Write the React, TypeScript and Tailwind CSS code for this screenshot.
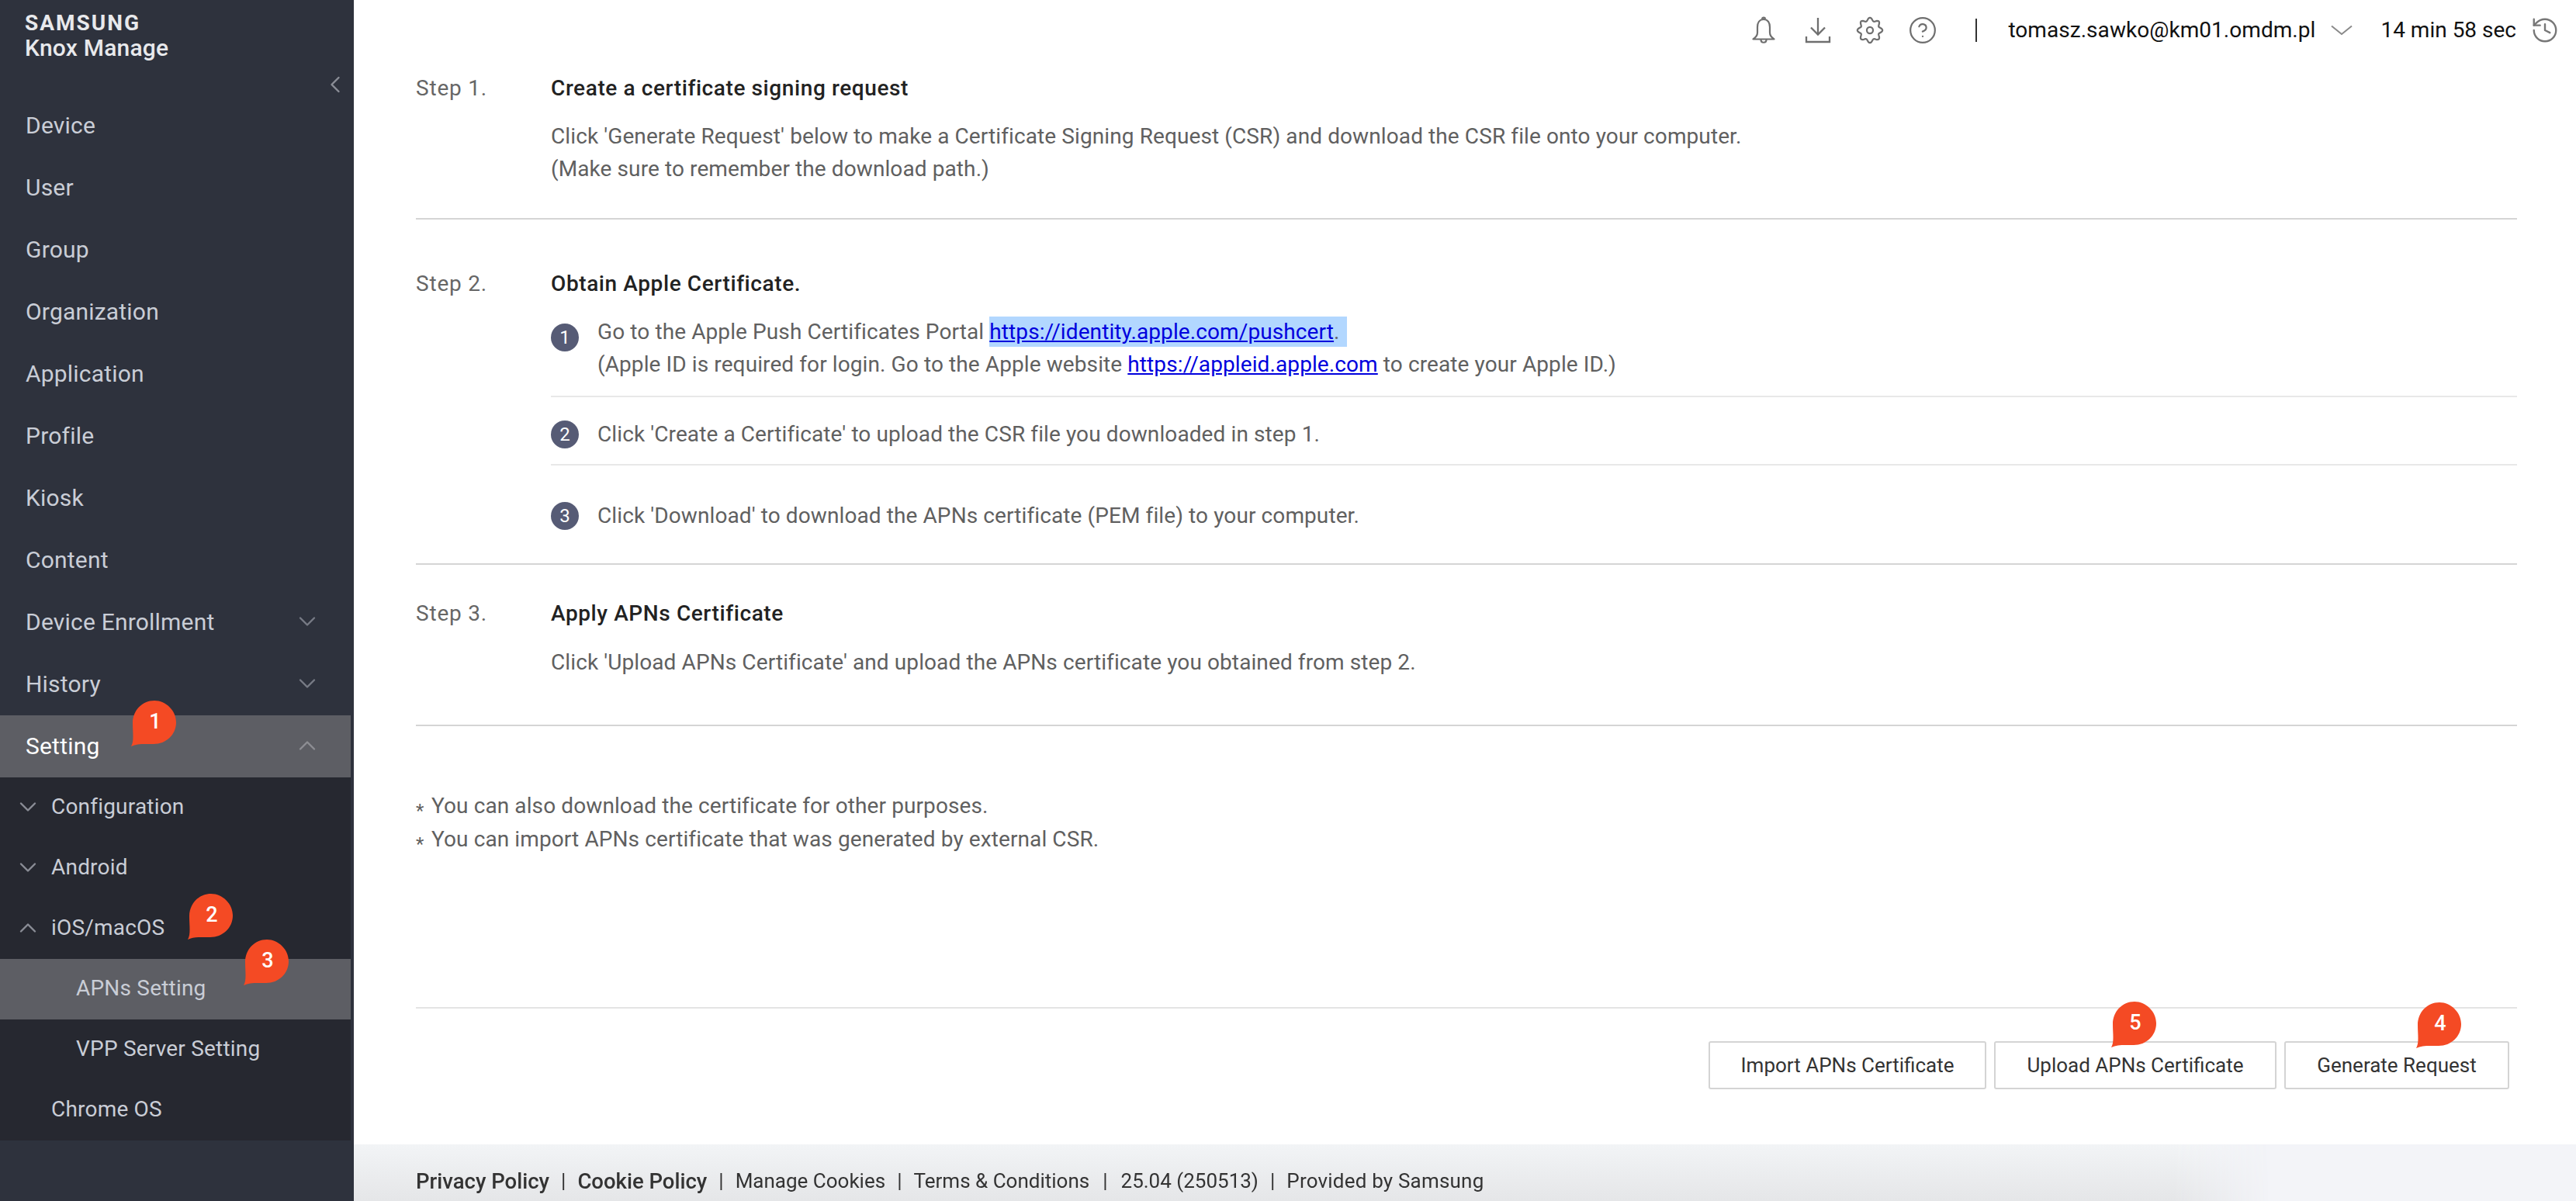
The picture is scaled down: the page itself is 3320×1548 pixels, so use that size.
import { ChevronDown, ChevronLeft, ChevronUp, CircleHelp, History } from "lucide-react";

// scalloped outline for the settings cog, 8 lobes
const gearPath = Array.from({ length: 96 }, (_, i) => {
  const a = (i / 96) * Math.PI * 2;
  const r = 13.4 + 1.9 * Math.cos(a * 8);
  return `${i === 0 ? "M" : "L"}${(17 + r * Math.sin(a)).toFixed(2)} ${(17 - r * Math.cos(a)).toFixed(2)}`;
}).join("") + "Z";

function Balloon({ n, className }: { n: string; className: string }) {
  return (
    <div className={`absolute z-10 h-[59px] w-[59px] ${className}`}>
      <svg viewBox="0 0 59 59" className="absolute inset-0 h-full w-full">
        <path
          d="M1 59C5 52 3 42 3 29C3 13 15 0 31 0C46 0 59 13 59 28C59 44 46 56 30 56C19 56 9 55 1 59Z"
          fill="#f44a24"
        />
      </svg>
      <span className="absolute inset-0 flex items-center justify-center pb-[4px] pl-[5px] text-[27px] font-medium text-white">
        {n}
      </span>
    </div>
  );
}

function NavItem({ label, open }: { label: string; open?: boolean }) {
  return (
    <div className="flex h-[80px] items-center justify-between pb-[2px] pl-[33px] pr-[42px] text-[30px] tracking-[0.2px] text-[#c9cdd6]">
      <span>{label}</span>
      {open === false && <ChevronDown size={36} strokeWidth={1.6} className="text-[#777b85]" />}
    </div>
  );
}

function SubItem({ label, icon, indent }: { label: string; icon?: "down" | "up"; indent?: boolean }) {
  return (
    <div className={`flex h-[78px] items-center pb-[2px] text-[28px] tracking-[0.2px] text-[#c9cdd6] ${indent ? "pl-[98px]" : "pl-[66px]"}`}>
      {icon === "down" && <ChevronDown size={36} strokeWidth={1.6} className="-ml-[48px] mr-[12px] text-[#8a8d96]" />}
      {icon === "up" && <ChevronUp size={36} strokeWidth={1.6} className="-ml-[48px] mr-[12px] text-[#8a8d96]" />}
      <span>{label}</span>
    </div>
  );
}

function Sidebar() {
  return (
    <aside className="flex h-full w-[456px] shrink-0 flex-col bg-[#2e323d]">
      <div className="relative h-[122px] pl-[32px] pt-[15px] text-[#e8e9ec]">
        <div className="text-[28px] font-bold leading-[30px] tracking-[2px]">SAMSUNG</div>
        <div className="text-[30px] font-medium leading-[34px] tracking-[0.2px]">Knox Manage</div>
        <ChevronLeft size={36} strokeWidth={1.6} className="absolute left-[414px] top-[91px] text-[#8b8e97]" />
      </div>
      <NavItem label="Device" />
      <NavItem label="User" />
      <NavItem label="Group" />
      <NavItem label="Organization" />
      <NavItem label="Application" />
      <NavItem label="Profile" />
      <NavItem label="Kiosk" />
      <NavItem label="Content" />
      <NavItem label="Device Enrollment" open={false} />
      <NavItem label="History" open={false} />
      <div className="relative flex h-[80px] w-[452px] items-center justify-between pb-[2px] bg-[#5d5e64] pl-[33px] pr-[38px] text-[30px] tracking-[0.2px] text-white">
        <span>Setting</span>
        <ChevronUp size={36} strokeWidth={1.6} className="text-[#8d8e93]" />
        <Balloon n="1" className="left-[168px] top-[-19px]" />
      </div>
      <div className="w-[452px] bg-[#262830]">
        <SubItem label="Configuration" icon="down" />
        <SubItem label="Android" icon="down" />
        <div className="relative">
          <SubItem label="iOS/macOS" icon="up" />
          <Balloon n="2" className="left-[241px] top-[-6px]" />
        </div>
        <div className="relative bg-[#5d5e64]">
          <SubItem label="APNs Setting" indent />
          <Balloon n="3" className="left-[313px] top-[-25px]" />
        </div>
        <SubItem label="VPP Server Setting" indent />
        <SubItem label="Chrome OS" />
      </div>
    </aside>
  );
}

function TopBar() {
  return (
    <header className="flex h-[80px] shrink-0 items-center justify-end pb-[2px] pr-[21px] text-[#111]">
      <div className="flex items-center text-[#6f6f6f]">
        <svg viewBox="0 0 30 36" className="h-[36px] w-[30px]" fill="none" stroke="currentColor" strokeWidth="2.2" strokeLinejoin="round">
          <path d="M15 4C9.5 4 7 8.5 7 14V21C7 25 4.5 27.5 1.5 29.5H28.5C25.5 27.5 23 25 23 21V14C23 8.5 20.5 4 15 4Z" />
          <path d="M13 3.5C13 1 17 1 17 3.5" />
          <path d="M11.5 30C11.5 35 18.5 35 18.5 30" />
        </svg>
        <svg viewBox="0 0 34 34" className="ml-[38px] h-[34px] w-[34px]" fill="none" stroke="currentColor" strokeWidth="2.3">
          <path d="M17 1V22" />
          <path d="M8 13.5L17 22.5L26 13.5" />
          <path d="M2 25V32H32V25" />
        </svg>
        <svg viewBox="0 0 34 34" className="ml-[32px] h-[36px] w-[36px]" fill="none" stroke="currentColor" strokeWidth="2.1" strokeLinejoin="round">
          <path d={gearPath} />
          <circle cx="17" cy="17" r="3.8" />
        </svg>
        <CircleHelp size={38} strokeWidth={1.4} className="ml-[31px]" />
      </div>
      <div className="ml-[49px] h-[30px] w-[2px] bg-[#333]" />
      <span className="ml-[40px] text-[28px] tracking-[0.05px]">tomasz.sawko@km01.omdm.pl</span>
      <svg viewBox="0 0 28 14" className="ml-[20px] h-[14px] w-[28px]" fill="none" stroke="#8a8a8a" strokeWidth="2">
        <path d="M1 1.5L14 12L27 1.5" />
      </svg>
      <span className="ml-[36px] text-[28px]">14 min 58 sec</span>
      <History size={38} strokeWidth={1.5} className="ml-[18px] text-[#777]" />
    </header>
  );
}

function NumberDot({ n }: { n: string }) {
  return (
    <span className="flex h-[36px] w-[36px] shrink-0 items-center justify-center rounded-full bg-[#565b75] text-[24px] text-white">
      {n}
    </span>
  );
}

function Step({ label, title, children }: { label: string; title: string; children: React.ReactNode }) {
  return (
    <div className="flex text-[28px] leading-[42px] tracking-[0.1px]">
      <div className="w-[174px] shrink-0 tracking-[0.8px] text-[#666]">{label}</div>
      <div className="flex-1">
        <div className="font-medium tracking-[0.6px] text-[#222]">{title}</div>
        {children}
      </div>
    </div>
  );
}

function Button({ label, width, children }: { label: string; width: string; children?: React.ReactNode }) {
  return (
    <div className={`relative flex h-[62px] items-center justify-center rounded-[3px] border-2 border-[#d4d4d4] bg-white text-[26px] text-[#333] ${width}`}>
      {label}
      {children}
    </div>
  );
}

function Footer() {
  return (
    <footer className="flex h-[73px] shrink-0 bg-[#f3f4f8] text-[26px] text-[#333]">
      <div className="flex w-[2470px] items-center bg-gradient-to-b from-[#f2f4f6] to-[#e5e6e8] pl-[80px] pt-[22px] [mask-image:linear-gradient(to_right,black_95%,transparent)]">
        <b className="text-[27.5px] font-medium">Privacy Policy</b>
        <span className="mx-[15px]">|</span>
        <b className="text-[27.5px] font-medium">Cookie Policy</b>
        <span className="mx-[15px]">|</span>
        <span>Manage Cookies</span>
        <span className="mx-[15px]">|</span>
        <span>Terms &amp; Conditions</span>
        <span className="mx-[17px]">|</span>
        <span>25.04 (250513)</span>
        <span className="mx-[15px]">|</span>
        <span className="tracking-[0.2px]">Provided by Samsung</span>
      </div>
    </footer>
  );
}

export default function App() {
  return (
    <div className="flex h-[1548px] w-[3320px] overflow-hidden bg-white font-[Roboto]">
      <Sidebar />
      <main className="flex min-w-0 flex-1 flex-col">
        <TopBar />
        <div className="flex flex-1 flex-col pl-[80px] pr-[76px] pt-[13px] text-[#606060]">
          {/* step 1 */}
          <Step label="Step 1." title="Create a certificate signing request">
            <p className="mt-[20px]">
              Click 'Generate Request' below to make a Certificate Signing Request (CSR) and download the CSR file onto your computer.
              <br />
              (Make sure to remember the download path.)
            </p>
          </Step>
          <hr className="mt-[42px] border-t-2 border-[#d5d5d5]" />

          {/* step 2 */}
          <div className="mt-[62px]">
            <Step label="Step 2." title="Obtain Apple Certificate.">
              <div className="mt-[20px] flex gap-[24px] border-b-2 border-[#e8e8e8] pb-[19px]">
                <span className="mt-[10px]"><NumberDot n="1" /></span>
                <p>
                  Go to the Apple Push Certificates Portal{" "}
                  <span className="bg-[#b2d7ff] py-[3px] pr-[9px]">
                    <a className="text-[#0000dd] underline">https://identity.apple.com/pushcert</a>.
                  </span>
                  <br />
                  (Apple ID is required for login. Go to the Apple website{" "}
                  <a className="text-[#0000dd] underline">https://appleid.apple.com</a> to create your Apple ID.)
                </p>
              </div>
              <div className="flex h-[88px] items-center gap-[24px] border-b-2 border-[#e8e8e8] pt-[10px]">
                <NumberDot n="2" />
                <p>Click 'Create a Certificate' to upload the CSR file you downloaded in step 1.</p>
              </div>
              <div className="flex h-[126px] items-center gap-[24px] pt-[4px]">
                <NumberDot n="3" />
                <p>Click 'Download' to download the APNs certificate (PEM file) to your computer.</p>
              </div>
            </Step>
          </div>
          <hr className="border-t-2 border-[#d5d5d5]" />

          {/* step 3 */}
          <div className="mt-[42px]">
            <Step label="Step 3." title="Apply APNs Certificate">
              <p className="mt-[21px]">Click 'Upload APNs Certificate' and upload the APNs certificate you obtained from step 2.</p>
            </Step>
          </div>
          <hr className="mt-[59px] border-t-2 border-[#d5d5d5]" />

          <div className="mt-[82px] text-[28px] leading-[41px] tracking-[0.1px]">
            <p><span className="inline-block w-[20px] translate-y-[5px] text-[24px]">*</span>You can also download the certificate for other purposes.</p>
            <p><span className="inline-block w-[20px] translate-y-[5px] text-[24px]">*</span>You can import APNs certificate that was generated by external CSR.</p>
          </div>

          <div className="mt-auto border-t-2 border-[#e4e4e4] pb-[71px] pr-[10px] pt-[42px]">
            <div className="flex justify-end gap-[10px]">
              <Button label="Import APNs Certificate" width="w-[358px]" />
              <Button label="Upload APNs Certificate" width="w-[364px]">
                <Balloon n="5" className="left-[148px] top-[-53px]" />
              </Button>
              <Button label="Generate Request" width="w-[290px]">
                <Balloon n="4" className="left-[167px] top-[-52px]" />
              </Button>
            </div>
          </div>
        </div>
        <Footer />
      </main>
    </div>
  );
}
